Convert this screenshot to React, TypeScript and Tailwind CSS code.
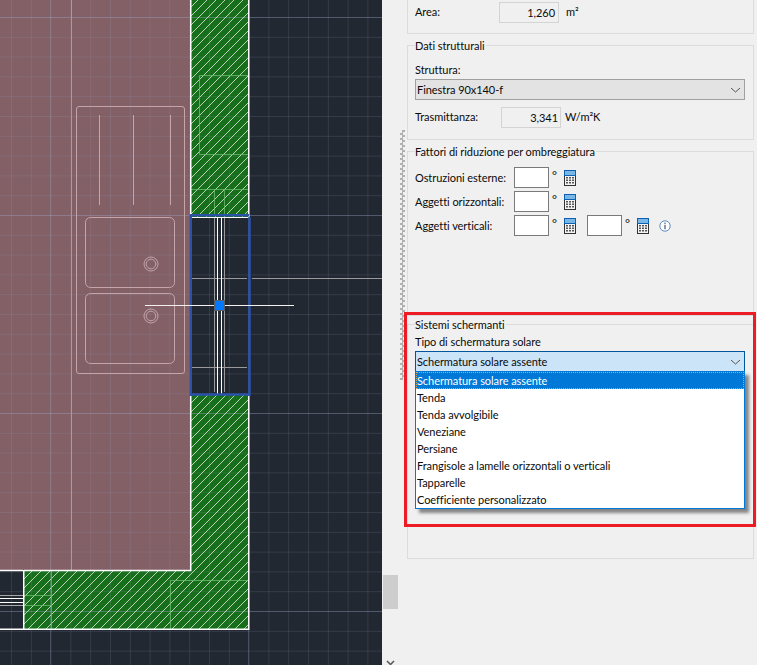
import React from "react";

const range = (start: number, step: number, count: number) => Array.from({ length: count }, (_, i) => start + step * i);
const vMinor = range(11.5, 19.8, 19);
const hMinor = range(17.5, 19.8, 33);

function Canvas() {
  return (
    <svg width="382" height="665" viewBox="0 0 382 665" className="block shrink-0">
      <defs>
        <pattern id="hatch" patternUnits="userSpaceOnUse" width="9" height="9">
          <path d="M-1 10 L10 -1" stroke="#ffffff" strokeWidth="0.7" shapeRendering="crispEdges" />
        </pattern>
      </defs>
      <rect width="382" height="665" fill="#222831" />
      <rect x="0" y="0" width="190" height="570" fill="#826066" />
      <path d="M190 0H249V217H190Z M190 395H249V630H23V570H190Z" fill="#176e1b" />
      {vMinor.map((x) => (
        <line key={x} x1={x} y1="0" x2={x} y2="665" stroke="#a0a8c8" strokeOpacity="0.15" strokeWidth="1" />
      ))}
      {hMinor.map((y) => (
        <line key={y} x1="0" y1={y} x2="382" y2={y} stroke="#a0a8c8" strokeOpacity="0.15" strokeWidth="1" />
      ))}
      {[51, 249].map((x) => (
        <line key={x} x1={x - 0.5} y1="0" x2={x - 0.5} y2="665" stroke="#a0a8c8" strokeOpacity="0.28" strokeWidth="1" />
      ))}
      {[17.5, 215.5, 413.5, 611.5].map((y) => (
        <line key={y} x1="0" y1={y} x2="382" y2={y} stroke="#a0a8c8" strokeOpacity="0.28" strokeWidth="1" />
      ))}
      <path d="M190 0H249V217H190Z M190 395H249V630H23V570H190Z" fill="url(#hatch)" />

      <g fill="none" stroke="#6fc06f" strokeOpacity="0.75" strokeWidth="1">
        <path d="M248 75.5H199.5V154.5H248" />
        <path d="M191 189.5H248 M214.5 189.5V214 M224.5 189.5V214" />
        <path d="M248 580.5H170.5V629 M51.5 571V629 M24 595.5H51 M24 605.5H51" />
      </g>

      <g fill="none" stroke="#c5a5aa" strokeWidth="1">
        <path d="M71.5 0V570" stroke="#b4959a" />
        <rect x="76.5" y="106.5" width="108" height="267" rx="2.5" />
        <path d="M99.5 115V205 M133.5 115V205 M170.5 115V205" />
        <rect x="85.5" y="217.5" width="89" height="70" rx="5" />
        <rect x="85.5" y="293.5" width="89" height="70" rx="5" />
        <circle cx="151" cy="264" r="7" />
        <circle cx="151" cy="264" r="4.8" />
        <circle cx="151" cy="316" r="7" />
        <circle cx="151" cy="316" r="4.8" />
      </g>

      <g fill="none" stroke="#ffffff" strokeWidth="1.5">
        <path d="M190.75 0V217 M248.75 0V217 M190.75 395V570.5H24 M248.75 395V629.25H23.75V570 M0 570.5H23 M0 629.25H23" />
      </g>
      <path d="M0 595.5H23 M0 605.5H23" stroke="#a8a8a8" strokeWidth="1" />
      <path d="M0 598.5H23 M0 602.5H23" stroke="#ffffff" strokeWidth="1" />

      <g fill="none">
        <path d="M214.5 217V392 M224.5 217V392 M192 367.5H247 M192 278.5H247 M252 278.5H382" stroke="#9a9a9a" strokeWidth="1" />
        <path d="M217.5 217V394 M221.5 217V394 M190 217.5H249" stroke="#ffffff" strokeWidth="1" />
        <path d="M190 215.25H249 M190 394.5H249 M190.75 215V396 M249.5 217V396" stroke="#2a52a8" strokeWidth="2.5" />
      </g>
      <path d="M145 305.5H294" stroke="#f4f0f0" strokeWidth="1" />
      <rect x="214.5" y="300.5" width="10" height="10" fill="#0078ff" stroke="#5a6068" strokeWidth="1" />
    </svg>
  );
}

function Calc() {
  return (
    <svg width="12" height="16" viewBox="0 0 12 16" className="block shrink-0">
      <rect x="0.5" y="0.5" width="11" height="15" fill="#f4f4f4" stroke="#333333" />
      <rect x="0.5" y="0.5" width="11" height="5" fill="#7ab6e6" stroke="#0a62b0" />
      {[7, 9.5, 12].map((y) =>
        [2, 5, 8].map((x) => <rect key={`${x}-${y}`} x={x} y={y} width="2" height="1.5" fill="#555555" />)
      )}
    </svg>
  );
}

function Info() {
  return (
    <svg width="12" height="12" viewBox="0 0 12 12" className="block shrink-0">
      <circle cx="6" cy="6" r="5.2" fill="#ffffff" stroke="#5f8ac6" strokeWidth="1" />
      <rect x="5.4" y="2.6" width="1.2" height="1.3" fill="#44546a" />
      <rect x="5.4" y="4.8" width="1.2" height="4.4" fill="#44546a" />
    </svg>
  );
}

function Chevron() {
  return (
    <svg width="11" height="6" viewBox="0 0 11 6" className="block shrink-0">
      <path d="M1 1L5.5 5L10 1" fill="none" stroke="#555555" strokeWidth="1" />
    </svg>
  );
}

function AngleInput() {
  return <div className="h-[21px] w-[35px] shrink-0 border border-[#7a7a7a] bg-white" />;
}

function Degree() {
  return <span className="w-[15px] shrink-0 -translate-y-[2px] pl-[3px] text-[12px]">°</span>;
}

function ShadeRow({ label, children }: { label: string; children?: React.ReactNode }) {
  return (
    <div className="flex h-[21px] items-center">
      <span className="w-[99px] shrink-0 whitespace-nowrap">{label}</span>
      <AngleInput />
      <Degree />
      <Calc />
      {children}
    </div>
  );
}

const items = [
  "Schermatura solare assente",
  "Tenda",
  "Tenda avvolgibile",
  "Veneziane",
  "Persiane",
  "Frangisole a lamelle orizzontali o verticali",
  "Tapparelle",
  "Coefficiente personalizzato",
];

function Legend({ children }: { children: React.ReactNode }) {
  return <div className="-mt-2 h-4 w-fit bg-[#f0f0f0] pr-px leading-4">{children}</div>;
}

export default function App() {
  return (
    <div
      className="relative flex h-[665px] w-[757px] overflow-hidden bg-[#f0f0f0] text-[11px] leading-4 tracking-[-0.06px] text-[#0a0a0a]"
      style={{ fontFamily: "Lato, sans-serif" }}
    >
      <Canvas />

      <div className="w-4 shrink-0 pl-px pt-[575px]">
        <div className="h-[34px] w-[15px] bg-[#cdcdcd]" />
        <div className="mt-[51px] pl-[3px]">
          <svg width="9" height="6" viewBox="0 0 9 6" className="block">
            <path d="M1 1L4.5 4.5L8 1" fill="none" stroke="#555555" strokeWidth="1.5" />
          </svg>
        </div>
      </div>

      <div className="w-[356px] shrink-0 pl-[9px]">
        <div className="h-[34px] w-[347px] border-x border-b border-[#dcdcdc] pl-[7px] pt-[2px]">
          <div className="flex h-[21px] items-center">
            <span className="w-[84px] shrink-0 -translate-y-px">Area:</span>
            <div className="flex h-[21px] w-[60px] shrink-0 items-center justify-end border border-[#d4d4d4] pr-[3px]">1,260</div>
            <span className="ml-[7px] -translate-y-px">m²</span>
          </div>
        </div>

        <div className="mt-[11px] h-[95px] w-[347px] border border-[#dcdcdc] pl-[7px]">
          <Legend>Dati strutturali</Legend>
          <div className="mt-[8px] h-4">Struttura:</div>
          <div className="mt-[1px] flex h-[21px] w-[330px] items-center justify-between border border-[#a0a0a0] bg-[#e3e3e3] pl-px pr-[3px]">
            <span>Finestra 90x140-f</span>
            <Chevron />
          </div>
          <div className="mt-[7px] flex h-[21px] items-center">
            <span className="w-[86px] shrink-0 -translate-y-px">Trasmittanza:</span>
            <div className="flex h-[21px] w-[60px] shrink-0 items-center justify-end border border-[#d4d4d4] pr-[2px]">3,341</div>
            <span className="ml-[4px] -translate-y-px">W/m²K</span>
          </div>
        </div>

        <div className="mt-[11px] h-[165px] w-[347px] border border-[#dcdcdc] pl-[7px]">
          <Legend>Fattori di riduzione per ombreggiatura</Legend>
          <div className="mt-[7px] flex flex-col gap-[3px]">
            <ShadeRow label="Ostruzioni esterne:" />
            <ShadeRow label="Aggetti orizzontali:" />
            <ShadeRow label="Aggetti verticali:">
              <div className="ml-[11px]">
                <AngleInput />
              </div>
              <Degree />
              <Calc />
              <div className="ml-[10px]">
                <Info />
              </div>
            </ShadeRow>
          </div>
        </div>

        <div className="relative mt-[8px] h-[235px] w-[347px] border border-[#dcdcdc] pl-[7px]">
          <Legend>Sistemi schermanti</Legend>
          <div className="mt-[1px] h-4">Tipo di schermatura solare</div>
          <div className="mt-[1px] flex h-[21px] w-[330px] items-center justify-between border border-[#00569c] bg-[#cce4f7] pl-px pr-[3px]">
            <span>Schermatura solare assente</span>
            <Chevron />
          </div>
          <ul className="absolute left-[7px] top-[46px] w-[330px] border border-[#0078d7] bg-white shadow-[4px_4px_3px_rgba(0,0,0,0.45)]">
            {items.map((item, i) => (
              <li
                key={item}
                className={
                  i === 0
                    ? "h-[17px] bg-[#0078d7] pl-px leading-[17px] text-white outline-1 -outline-offset-1 outline-dotted outline-[#e8a040]"
                    : "h-[17px] pl-px leading-[17px]"
                }
              >
                {item}
              </li>
            ))}
          </ul>
        </div>
      </div>

      <div className="absolute left-[400px] top-[130px] h-[250px] w-[5px] bg-[conic-gradient(#b0b0b0_25%,transparent_0_50%,#b0b0b0_0_75%,transparent_0)] bg-[length:5px_5px]" />
      <div className="absolute left-[404px] top-[312px] h-[215px] w-[352px] border-[3.5px] border-[#ed1c24]" />
    </div>
  );
}
